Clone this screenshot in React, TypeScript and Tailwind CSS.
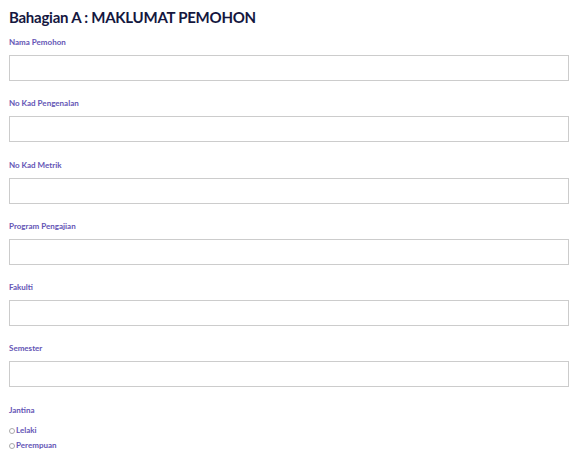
const fields = [
  "Nama Pemohon",
  "No Kad Pengenalan",
  "No Kad Metrik",
  "Program Pengajian",
  "Fakulti",
  "Semester",
];

export default function App() {
  return (
    <div
      className="w-[582px] h-[459px] bg-white px-[9px] pt-[7px] overflow-hidden"
      style={{ fontFamily: "Lato, 'Open Sans', sans-serif" }}
    >
      <h1 className="text-[15px] font-bold leading-[20px] tracking-[-0.25px] text-[#15173f]">
        Bahagian A : MAKLUMAT PEMOHON
      </h1>
      <div className="mt-[10px] flex flex-col">
        {fields.map((f) => (
          <div key={f} className="h-[61.3px]">
            <label className="block text-[8px] font-bold leading-[10px] text-[#6455b5]">
              {f}
            </label>
            <input
              type="text"
              className="mt-[8px] block w-[560px] h-[26px] border border-[#cccccc] bg-white outline-none"
            />
          </div>
        ))}
        <div>
          <p className="text-[8px] font-bold leading-[10px] text-[#6455b5]">Jantina</p>
          <div className="mt-[10px] flex flex-col gap-[5px]">
            {["Lelaki", "Perempuan"].map((g) => (
              <label key={g} className="flex items-end gap-[1px] text-[8px] font-bold leading-[10px] text-[#6455b5]">
                <span className="mb-[1px] inline-block w-[6px] h-[6px] rounded-full border border-[#aaaaaa] bg-white" />
                {g}
              </label>
            ))}
          </div>
        </div>
      </div>
    </div>
  );
}
